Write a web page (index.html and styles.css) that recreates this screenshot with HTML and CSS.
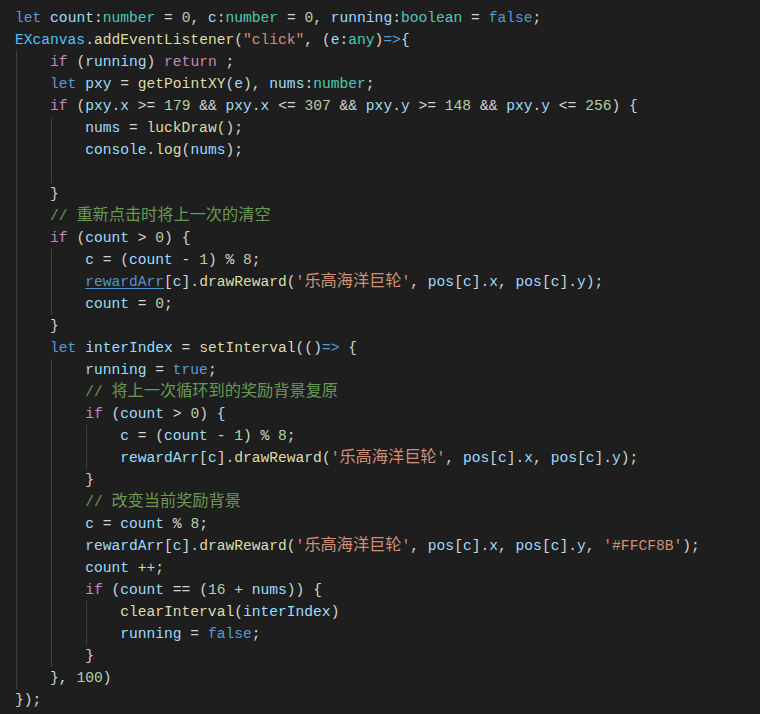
FILE: index.html
```html
<!DOCTYPE html>
<html lang="zh">
<head>
<meta charset="utf-8">
<title>code</title>
<link rel="stylesheet" href="styles.css">
</head>
<body>
<div class="editor">
<div class="ln"><span class="k">let</span> <span class="v">count</span>:<span class="t">number</span> = <span class="n">0</span>, <span class="v">c</span>:<span class="t">number</span> = <span class="n">0</span>, <span class="v">running</span>:<span class="t">boolean</span> = <span class="k">false</span>;</div>
<div class="ln"><span class="cn">EXcanvas</span>.<span class="f">addEventListener</span>(<span class="s">"click"</span>, (<span class="v">e</span>:<span class="t">any</span>)<span class="k">=&gt;</span>{</div>
<div class="ln"><span class="g"></span><span class="c">if</span> (<span class="v">running</span>) <span class="c">return</span> ;</div>
<div class="ln"><span class="g"></span><span class="k">let</span> <span class="v">pxy</span> = <span class="f">getPointXY</span>(<span class="v">e</span>), <span class="v">nums</span>:<span class="t">number</span>;</div>
<div class="ln"><span class="g"></span><span class="c">if</span> (<span class="v">pxy</span>.<span class="v">x</span> &gt;= <span class="n">179</span> &amp;&amp; <span class="v">pxy</span>.<span class="v">x</span> &lt;= <span class="n">307</span> &amp;&amp; <span class="v">pxy</span>.<span class="v">y</span> &gt;= <span class="n">148</span> &amp;&amp; <span class="v">pxy</span>.<span class="v">y</span> &lt;= <span class="n">256</span>) {</div>
<div class="ln"><span class="g"></span><span class="g"></span><span class="v">nums</span> = <span class="f">luckDraw</span>();</div>
<div class="ln"><span class="g"></span><span class="g"></span><span class="v">console</span>.<span class="f">log</span>(<span class="v">nums</span>);</div>
<div class="ln"><span class="g"></span><span class="g"></span></div>
<div class="ln"><span class="g"></span>}</div>
<div class="ln"><span class="g"></span><span class="cm">// <span class="cj">重新点击时将上一次的清空</span></span></div>
<div class="ln"><span class="g"></span><span class="c">if</span> (<span class="v">count</span> &gt; <span class="n">0</span>) {</div>
<div class="ln"><span class="g"></span><span class="g"></span><span class="v">c</span> = (<span class="v">count</span> - <span class="n">1</span>) % <span class="n">8</span>;</div>
<div class="ln"><span class="g"></span><span class="g"></span><span class="lk">rewardArr</span>[<span class="v">c</span>].<span class="f">drawReward</span>(<span class="s">'<span class="cj">乐高海洋巨轮</span>'</span>, <span class="v">pos</span>[<span class="v">c</span>].<span class="v">x</span>, <span class="v">pos</span>[<span class="v">c</span>].<span class="v">y</span>);</div>
<div class="ln"><span class="g"></span><span class="g"></span><span class="v">count</span> = <span class="n">0</span>;</div>
<div class="ln"><span class="g"></span>}</div>
<div class="ln"><span class="g"></span><span class="k">let</span> <span class="v">interIndex</span> = <span class="f">setInterval</span>(()<span class="k">=&gt;</span> {</div>
<div class="ln"><span class="g"></span><span class="g"></span><span class="v">running</span> = <span class="k">true</span>;</div>
<div class="ln"><span class="g"></span><span class="g"></span><span class="cm">// <span class="cj">将上一次循环到的奖励背景复原</span></span></div>
<div class="ln"><span class="g"></span><span class="g"></span><span class="c">if</span> (<span class="v">count</span> &gt; <span class="n">0</span>) {</div>
<div class="ln"><span class="g"></span><span class="g"></span><span class="g"></span><span class="v">c</span> = (<span class="v">count</span> - <span class="n">1</span>) % <span class="n">8</span>;</div>
<div class="ln"><span class="g"></span><span class="g"></span><span class="g"></span><span class="v">rewardArr</span>[<span class="v">c</span>].<span class="f">drawReward</span>(<span class="s">'<span class="cj">乐高海洋巨轮</span>'</span>, <span class="v">pos</span>[<span class="v">c</span>].<span class="v">x</span>, <span class="v">pos</span>[<span class="v">c</span>].<span class="v">y</span>);</div>
<div class="ln"><span class="g"></span><span class="g"></span>}</div>
<div class="ln"><span class="g"></span><span class="g"></span><span class="cm">// <span class="cj">改变当前奖励背景</span></span></div>
<div class="ln"><span class="g"></span><span class="g"></span><span class="v">c</span> = <span class="v">count</span> % <span class="n">8</span>;</div>
<div class="ln"><span class="g"></span><span class="g"></span><span class="v">rewardArr</span>[<span class="v">c</span>].<span class="f">drawReward</span>(<span class="s">'<span class="cj">乐高海洋巨轮</span>'</span>, <span class="v">pos</span>[<span class="v">c</span>].<span class="v">x</span>, <span class="v">pos</span>[<span class="v">c</span>].<span class="v">y</span>, <span class="s">'#FFCF8B'</span>);</div>
<div class="ln"><span class="g"></span><span class="g"></span><span class="v">count</span> ++;</div>
<div class="ln"><span class="g"></span><span class="g"></span><span class="c">if</span> (<span class="v">count</span> == (<span class="n">16</span> + <span class="v">nums</span>)) {</div>
<div class="ln"><span class="g"></span><span class="g"></span><span class="g"></span><span class="f">clearInterval</span>(<span class="v">interIndex</span>)</div>
<div class="ln"><span class="g"></span><span class="g"></span><span class="g"></span><span class="v">running</span> = <span class="k">false</span>;</div>
<div class="ln"><span class="g"></span><span class="g"></span>}</div>
<div class="ln"><span class="g"></span>}, <span class="n">100</span>)</div>
<div class="ln">});</div>
</div>
</body>
</html>
```

FILE: styles.css
```css
html, body {
  margin: 0;
  padding: 0;
  background: #1e1e1e;
}

.editor {
  padding: 7px 0 0 15px;
  font-family: "Liberation Mono", "DejaVu Sans Mono", monospace;
  font-size: 14.62px;
  color: #d4d4d4;
  height: 707px;
}

.ln {
  height: 22px;
  line-height: 22px;
  white-space: pre;
}

.g {
  display: inline-block;
  width: 4ch;
  height: 22px;
  vertical-align: top;
  background: linear-gradient(to right, transparent 1px, #404040 1px, #404040 2px, transparent 2px);
}

.k { color: #569cd6; }
.c { color: #c586c0; }
.v { color: #9cdcfe; }
.t { color: #4ec9b0; }
.n { color: #b5cea8; }
.s { color: #ce9178; }
.f { color: #dcdcaa; }
.cm { color: #6a9955; }
.cn { color: #4fc1ff; }
.lk {
  color: #4e94ce;
  text-decoration: underline;
  text-underline-offset: 2px;
}

.cj {
  font-family: "Noto Sans CJK SC", sans-serif;
  font-size: 16.2px;
  line-height: 1;
}
```
